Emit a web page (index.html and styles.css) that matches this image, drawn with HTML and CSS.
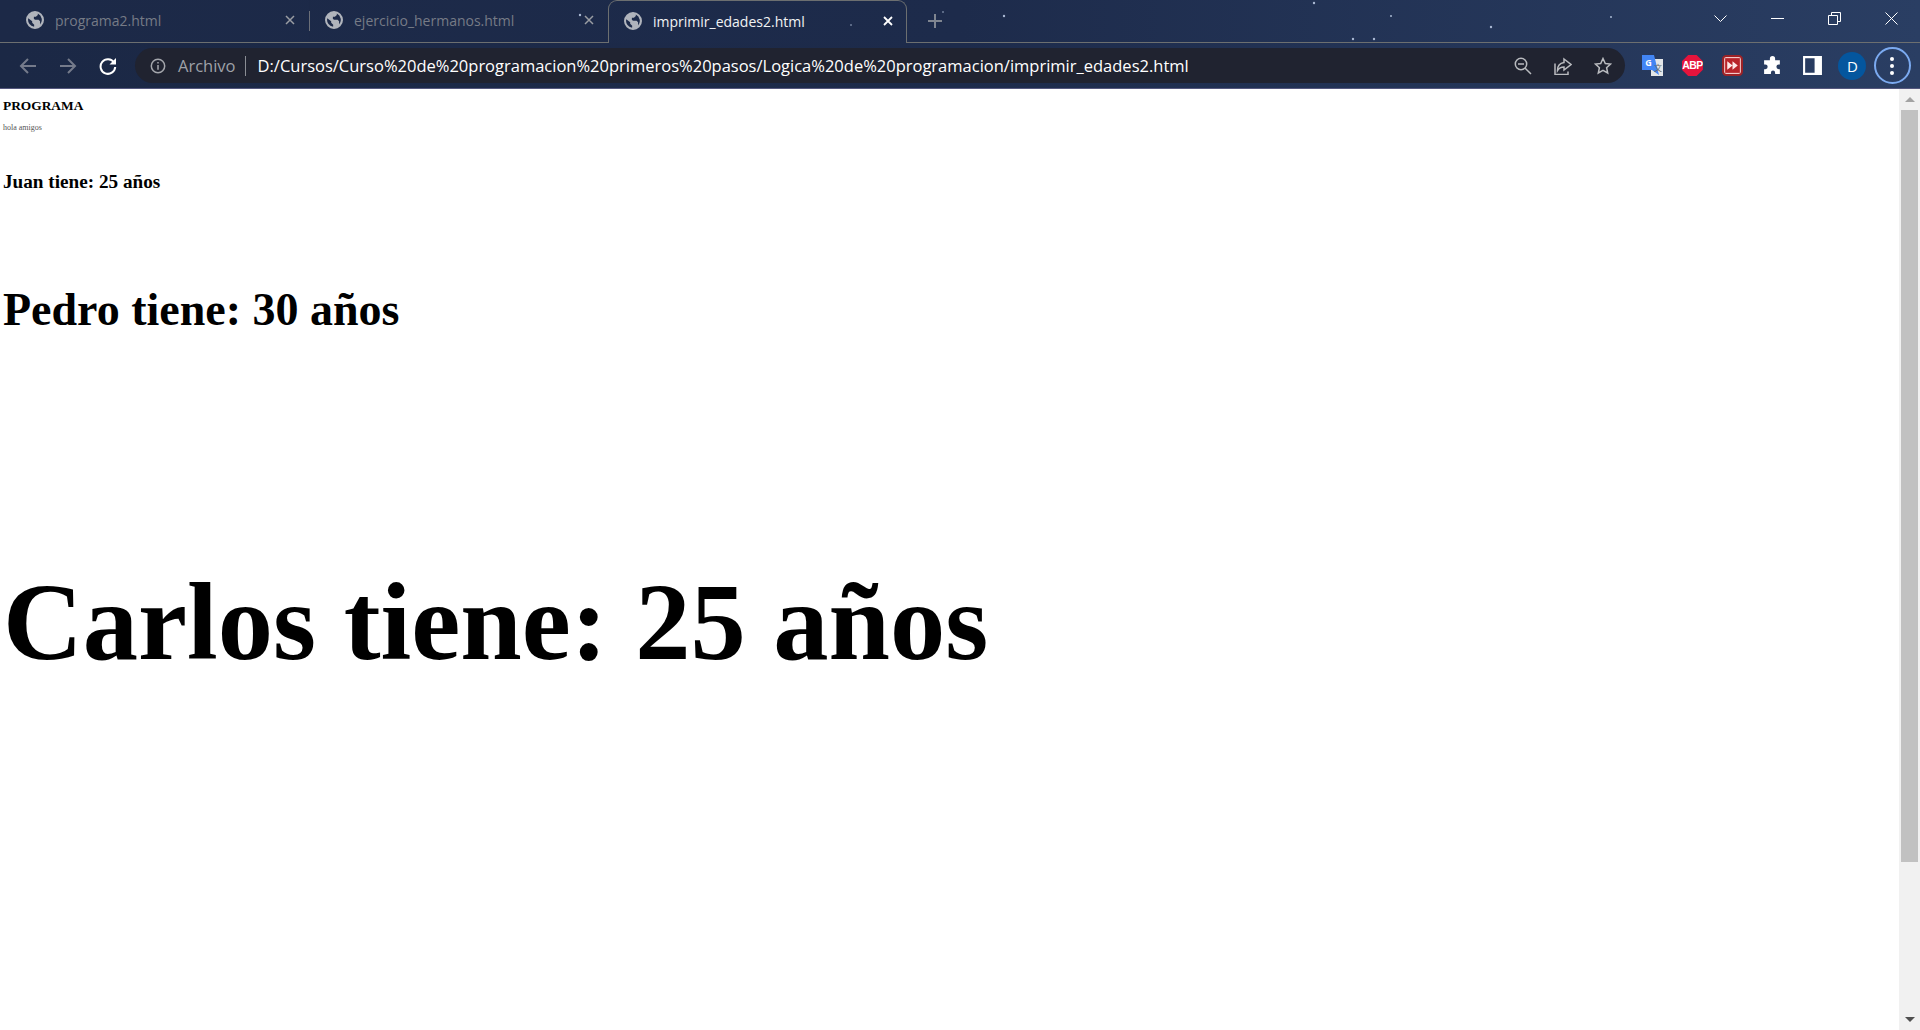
FILE: index.html
```html
<!DOCTYPE html>
<html lang="es">
<head>
    <meta charset="UTF-8">
    <title>imprimir_edades2.html</title>
    <link rel="stylesheet" href="styles.css">
</head>
<body>
    <div class="browser">
        <svg class="stars" width="1920" height="88" viewBox="0 0 1920 88">
            <g fill="#a9b8d2">
                <circle cx="1004" cy="16" r="1.2"/>
                <circle cx="1314" cy="3" r="1.2"/>
                <circle cx="1391" cy="16" r="1"/>
                <circle cx="1491" cy="27" r="1.2"/>
                <circle cx="1611" cy="17" r="1"/>
                <circle cx="1353" cy="39" r="1.2"/>
                <circle cx="1374" cy="39" r="1.2"/>
                <circle cx="580" cy="15" r="1.2"/>
                <circle cx="851" cy="25" r="0.8"/>
                <circle cx="943" cy="12" r="0.8"/>
            </g>
        </svg>
        <header class="tabstrip">
            <div class="tab">
                <svg class="globe" viewBox="0 0 16 16"><use href="#globe"/></svg>
                <span class="tab-title">programa2.html</span>
                <svg class="tab-close" viewBox="0 0 10 10"><path d="M1 1l8 8M9 1l-8 8"/></svg>
            </div>
            <div class="tab-sep"></div>
            <div class="tab tab-second">
                <svg class="globe" viewBox="0 0 16 16"><use href="#globe"/></svg>
                <span class="tab-title">ejercicio_hermanos.html</span>
                <svg class="tab-close" viewBox="0 0 10 10"><path d="M1 1l8 8M9 1l-8 8"/></svg>
            </div>
            <div class="tab tab-active">
                <svg class="globe" viewBox="0 0 16 16"><use href="#globe"/></svg>
                <span class="tab-title">imprimir_edades2.html</span>
                <svg class="tab-close" viewBox="0 0 10 10"><path d="M1 1l8 8M9 1l-8 8"/></svg>
            </div>
            <div class="strip-rest">
                <svg class="new-tab" viewBox="0 0 14 14"><path d="M7 0v14M0 7h14"/></svg>
                <div class="window-controls">
                    <svg class="win-icon" viewBox="0 0 13 13"><path d="M.5 3.500l6 6 6-6"/></svg>
                    <svg class="win-icon" viewBox="0 0 13 13"><path d="M0 6.500h13"/></svg>
                    <svg class="win-icon" viewBox="0 0 13 13"><path d="M.5 3.500h9v9h-9zM3.500 3.500v-3h9v9h-3"/></svg>
                    <svg class="win-icon" viewBox="0 0 13 13"><path d="M.5.5l12 12M12.500.5l-12 12"/></svg>
                </div>
            </div>
        </header>
        <nav class="toolbar">
            <svg class="nav-icon dim" viewBox="0 0 18 18"><path d="M17 9H2M9 2L2 9l7 7"/></svg>
            <svg class="nav-icon dim" viewBox="0 0 18 18"><path d="M1 9h15M9 2l7 7-7 7"/></svg>
            <svg class="nav-icon" viewBox="0 0 18 18"><path d="M15 5.500A7.300 7.300 0 1 0 16.200 10"/><path class="solid" d="M17 1v6.500h-6.500z"/></svg>
            <div class="omnibox">
                <svg class="info-icon" viewBox="0 0 16 16"><circle cx="8" cy="8" r="6.700"/><path d="M8 7v4.700M8 4v1.600"/></svg>
                <span class="scheme">Archivo</span>
                <span class="divider"></span>
                <span class="url">D:/Cursos/Curso%20de%20programacion%20primeros%20pasos/Logica%20de%20programacion/imprimir_edades2.html</span>
                <svg class="omni-icon" viewBox="0 0 18 18"><circle cx="7" cy="7" r="5.700"/><path d="M4 7h6M11.200 11.200l5.800 5.800"/></svg>
                <svg class="omni-icon" viewBox="0 0 18 18"><path d="M10 2l7 5.500-7 5.500v-3c-3 0-5 1-6.500 3.500C3.500 9 6 6 10 5.500z"/><path d="M1 6.500v11h13v-3"/></svg>
                <svg class="omni-icon" viewBox="0 0 18 18"><path d="M9 1.500l2.300 5 5.200.6-3.900 3.600 1.100 5.300L9 13.300 4.300 16l1.100-5.300L1.500 7.100l5.200-.6z"/></svg>
            </div>
            <div class="extensions">
                <div class="ext ext-translate">
                    <svg viewBox="0 0 21 21">
                        <rect x="9" y="4" width="12" height="17" fill="#e3e6e8"/>
                        <path d="M0 0h12l5 20-7-5H0z" fill="#4285f4"/>
                    </svg>
                    <span class="tr-back">文</span>
                    <span class="tr-front">G</span>
                </div>
                <div class="ext ext-abp">ABP</div>
                <div class="ext">
                    <svg viewBox="0 0 20 20"><rect width="18" height="18" x="1" y="1" rx="3" fill="#f3c9c9" stroke="#9c2226" stroke-width="2"/><rect x="3" y="3" width="14" height="14" fill="#b8242a"/><path d="M5 6l5 4-5 4zM10 6l5 4-5 4z" fill="#fde8e8"/></svg>
                </div>
                <div class="ext">
                    <svg viewBox="0 0 20 20"><path fill="#fff" d="M7.500 3.500a2.500 2.500 0 0 1 5 0V5h4.500v4h-1a2.300 2.300 0 0 0 0 4.600h1V18h-4.500v-1.200a2 2 0 0 0-4 0V18H2v-4.500h1.200a2.200 2.200 0 0 0 0-4.400H2V5h5.500z"/></svg>
                </div>
                <div class="ext">
                    <svg viewBox="0 0 20 20"><path fill="#fff" fill-rule="evenodd" d="M1 1h18v18H1zM3 3v14h9V3z"/></svg>
                </div>
                <div class="avatar">D</div>
                <div class="menu-btn"><span></span><span></span><span></span></div>
            </div>
        </nav>
        <div class="viewport">
            <main class="page">
                <h4 class="title">PROGRAMA</h4>
                <p class="small">hola amigos</p>
                <h3 class="age age-juan">Juan tiene: 25 años</h3>
                <h1 class="age age-pedro">Pedro tiene: 30 años</h1>
                <h1 class="age age-carlos">Carlos tiene: 25 años</h1>
            </main>
            <div class="scrollbar">
                <span class="arrow-up"></span>
                <div class="thumb"></div>
                <span class="arrow-down"></span>
            </div>
        </div>
    </div>
    <svg class="defs" width="0" height="0">
        <symbol id="globe" viewBox="0 0 16 16">
            <path fill-rule="evenodd" d="M8 0a8 8 0 1 1 0 16A8 8 0 0 1 8 0zM2 6.500A6.200 6.200 0 0 0 7.200 14l.1-1.700-1.800-1.800V9L2 6.500zM10.500 2.300V3.500L8.800 5 7 5.200V7l1.200.8h3l1.300 1.400V12A6.200 6.200 0 0 0 10.500 2.300z"/>
        </symbol>
    </svg>
</body>
</html>
```

FILE: styles.css
```css
* {
    margin: 0;
    padding: 0;
    box-sizing: border-box;
}

html, body {
    height: 100%;
    overflow: hidden;
}

body {
    font-family: "Liberation Serif", serif;
    background: #fff;
}

.browser {
    position: relative;
    display: flex;
    flex-direction: column;
    height: 1030px;
}

.stars {
    position: absolute;
    top: 0;
    left: 0;
    z-index: 1;
    pointer-events: none;
}

.defs {
    position: absolute;
}

/* tab strip */
.tabstrip {
    display: flex;
    height: 43px;
    flex: none;
    background: linear-gradient(90deg, #1c2947 0%, #1d2b4b 50%, #2a3e63 100%);
    font-family: "Open Sans", "Noto Sans", sans-serif;
    font-size: 14px;
}

.tab {
    display: flex;
    align-items: center;
    width: 309px;
    height: 43px;
    padding: 0 14px 2px 26px;
    border-bottom: 1px solid #6c6f70;
    color: #767b86;
}

.tab-second {
    width: 298px;
    padding-left: 15px;
    padding-right: 14px;
}

.tab-sep {
    flex: none;
    width: 1px;
    height: 43px;
    background: linear-gradient(#1c2947 0, #1c2947 11px, #6b6f78 11px, #6b6f78 31px, #1c2947 31px, #1c2947 42px, #6c6f70 42px);
}

.tab-active {
    width: 299px;
    padding-left: 15px;
    padding-right: 13px;
    border: 1px solid #6c6f70;
    border-bottom: 0;
    border-radius: 9px 9px 0 0;
    color: #f1f3f4;
}

.globe {
    flex: none;
    width: 18px;
    height: 18px;
    margin-right: 11px;
    fill: #b0b4bc;
}

.tab-title {
    flex: 1;
    white-space: nowrap;
}

.tab-close {
    flex: none;
    width: 10px;
    height: 10px;
    fill: none;
    stroke: #9a9da3;
    stroke-width: 1.500;
}

.tab-active .tab-close {
    stroke: #fff;
    stroke-width: 1.800;
}

.strip-rest {
    flex: 1;
    display: flex;
    align-items: center;
    padding-left: 21px;
    height: 43px;
    border-bottom: 1px solid #6c6f70;
}

.new-tab {
    width: 14px;
    height: 14px;
    fill: none;
    stroke: #7f8590;
    stroke-width: 2;
}

.window-controls {
    display: flex;
    align-items: center;
    gap: 44px;
    margin-left: auto;
    margin-right: 22px;
    margin-top: -6px;
}

.win-icon {
    width: 13px;
    height: 13px;
    fill: none;
    stroke: #fff;
    stroke-width: 1;
}

/* toolbar */
.toolbar {
    display: flex;
    align-items: center;
    flex: none;
    height: 46px;
    padding-left: 19px;
    background: linear-gradient(90deg, #1b2845 0%, #1d2b4b 50%, #2a3e63 100%);
    border-bottom: 1px solid #55587e;
}

.nav-icon {
    flex: none;
    width: 18px;
    height: 18px;
    margin-right: 22px;
    fill: none;
    stroke: #fff;
    stroke-width: 2;
}

.nav-icon.dim {
    stroke: #757b8b;
}

.solid {
    fill: #fff;
    stroke: none;
}

.omnibox {
    display: flex;
    align-items: center;
    flex: none;
    width: 1490px;
    height: 35px;
    margin-left: -4px;
    padding: 0 13px 0 15px;
    border-radius: 18px;
    background: #202330;
    font-family: "Open Sans", "Noto Sans", sans-serif;
    font-size: 16.500px;
    white-space: nowrap;
}

.info-icon {
    flex: none;
    width: 16px;
    height: 16px;
    margin-right: 12px;
    fill: none;
    stroke: #a4a6ac;
    stroke-width: 1.500;
}

.scheme {
    color: #9ea1a8;
}

.divider {
    flex: none;
    width: 1px;
    height: 20px;
    margin: 0 12px 0 9px;
    background: #8a8d94;
}

.url {
    flex: 1;
    color: #fff;
}

.omni-icon {
    flex: none;
    width: 18px;
    height: 18px;
    margin-left: 22px;
    fill: none;
    stroke: #b9bbbf;
    stroke-width: 1.500;
}

.extensions {
    display: flex;
    align-items: center;
    margin-left: 17px;
    gap: 18.900px;
}

.ext {
    position: relative;
    flex: none;
    width: 21px;
    height: 21px;
}

.ext svg {
    display: block;
    width: 100%;
    height: 100%;
}

.tr-front {
    position: absolute;
    top: 1px;
    left: 1px;
    width: 11px;
    color: #fff;
    font: bold 9px/13px "Open Sans", sans-serif;
    text-align: center;
}

.tr-back {
    position: absolute;
    right: 0;
    bottom: 2px;
    width: 10px;
    color: #666;
    font: 8px/12px "Noto Sans CJK SC", sans-serif;
    text-align: center;
}

.ext-abp {
    clip-path: polygon(30% 0, 70% 0, 100% 30%, 100% 70%, 70% 100%, 30% 100%, 0 70%, 0 30%);
    background: #e6143c;
    color: #fff;
    font: bold 10.500px/21px "Liberation Sans", sans-serif;
    letter-spacing: -0.600px;
    text-align: center;
}

.avatar {
    flex: none;
    width: 28px;
    height: 28px;
    margin-left: -3px;
    border-radius: 50%;
    background: #04569e;
    color: #fff;
    font: 15px/28px "Open Sans", sans-serif;
    text-align: center;
}

.menu-btn {
    display: flex;
    flex-direction: column;
    align-items: center;
    justify-content: center;
    gap: 3px;
    flex: none;
    width: 37px;
    height: 37px;
    margin-left: -11.500px;
    border: 2px solid #7baaf0;
    border-radius: 50%;
}

.menu-btn span {
    width: 4px;
    height: 4px;
    border-radius: 50%;
    background: #fff;
}

/* page */
.viewport {
    flex: 1;
    display: flex;
    min-height: 0;
}

.page {
    flex: 1;
    padding: 9px 0 0 3px;
    color: #000;
    white-space: nowrap;
}

.title {
    font-size: 13.400px;
    line-height: 16px;
}

.small {
    margin-top: 8.500px;
    font-size: 8px;
    line-height: 9px;
    color: #555;
}

.age {
    font-weight: bold;
}

.age-juan {
    margin-top: 39px;
    font-size: 19.200px;
    line-height: 21px;
}

.age-pedro {
    margin-top: 90px;
    font-size: 46px;
    line-height: 55px;
}

.age-carlos {
    margin-top: 224.500px;
    font-size: 110.500px;
    line-height: 122px;
}

.scrollbar {
    display: flex;
    flex-direction: column;
    align-items: center;
    flex: none;
    width: 21px;
    background: #f1f1f1;
}

.arrow-up {
    margin-top: 8px;
    border: 5px solid transparent;
    border-top: 0;
    border-bottom: 5px solid #a3a3a3;
}

.thumb {
    width: 17px;
    height: 752px;
    margin-top: 8px;
    background: #c1c1c1;
}

.arrow-down {
    margin-top: auto;
    margin-bottom: 8px;
    border: 5px solid transparent;
    border-bottom: 0;
    border-top: 5px solid #505050;
}
```
